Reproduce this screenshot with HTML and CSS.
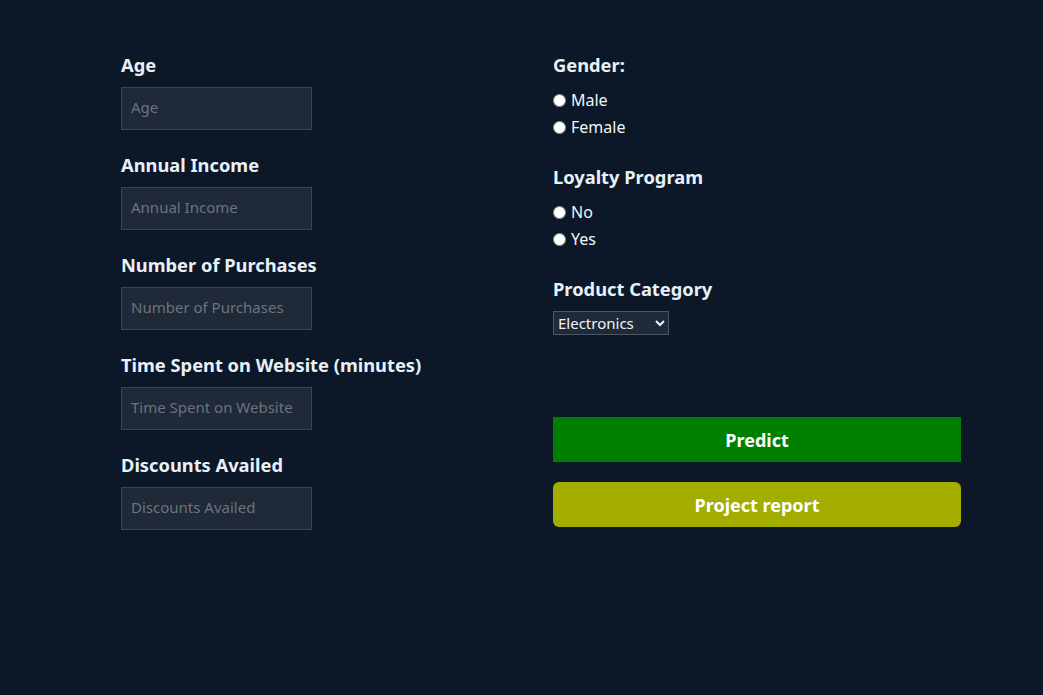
FILE: index.html
```html
<!DOCTYPE html>
<html>
<head>
<meta charset="utf-8">
<link rel="stylesheet" href="styles.css">
</head>
<body>
<form class="form">
  <div class="col col-left">
    <div class="field">
      <label class="label">Age</label>
      <input class="input" type="text" placeholder="Age">
    </div>
    <div class="field">
      <label class="label">Annual Income</label>
      <input class="input" type="text" placeholder="Annual Income">
    </div>
    <div class="field">
      <label class="label">Number of Purchases</label>
      <input class="input" type="text" placeholder="Number of Purchases">
    </div>
    <div class="field">
      <label class="label">Time Spent on Website (minutes)</label>
      <input class="input" type="text" placeholder="Time Spent on Website">
    </div>
    <div class="field">
      <label class="label">Discounts Availed</label>
      <input class="input" type="text" placeholder="Discounts Availed">
    </div>
  </div>
  <div class="col col-right">
    <div class="group">
      <div class="label">Gender:</div>
      <label class="radio"><input type="radio" name="g"> Male</label>
      <label class="radio"><input type="radio" name="g"> Female</label>
    </div>
    <div class="group">
      <div class="label">Loyalty Program</div>
      <label class="radio"><input type="radio" name="l"> No</label>
      <label class="radio"><input type="radio" name="l"> Yes</label>
    </div>
    <div class="group">
      <div class="label label-select">Product Category</div>
      <select class="select">
        <option>Electronics</option>
        <option>Clothing</option>
        <option>Home Goods</option>
      </select>
    </div>
    <div class="buttons">
      <button type="button" class="btn btn-predict">Predict</button>
      <button type="button" class="btn btn-report">Project report</button>
    </div>
  </div>
</form>
</body>
</html>
```
FILE: styles.css
```css
html, body {
  margin: 0;
  padding: 0;
  background: #0c1827;
  height: 100%;
}
body {
  font-family: "Noto Sans", "Open Sans", sans-serif;
  color: #e8f0f8;
}
.form {
  display: grid;
  grid-template-columns: 432px 408px;
  padding: 51px 0 0 121px;
}
.col {
  display: flex;
  flex-direction: column;
}
.field {
  display: flex;
  flex-direction: column;
  margin-bottom: 21px;
}
.label {
  font-weight: 700;
  font-size: 18.3px;
  line-height: 28px;
  color: #e8f0f8;
  margin-bottom: 8px;
}
.input {
  box-sizing: border-box;
  width: 191px;
  height: 43px;
  background: #1f2937;
  border: 1px solid #3a4656;
  color: #e8f0f8;
  font-family: inherit;
  font-size: 15px;
  padding: 0 9px 3px;
  outline: none;
}
.input::placeholder {
  color: #6b7480;
}
.group {
  display: flex;
  flex-direction: column;
  margin-bottom: 22px;
}
.group .label {
  margin-bottom: 8px;
}
.group .label-select {
  margin-bottom: 8px;
}
.radio {
  display: flex;
  align-items: center;
  font-size: 16px;
  line-height: 27px;
  color: #f0f4f8;
}
.radio input {
  margin: 0 5px 0 0;
  width: 13px;
  height: 13px;
}
.select {
  width: 116px;
  height: 24px;
  background: #1f2937;
  color: #f0f4f8;
  border: 1px solid #4a5565;
  font-family: inherit;
  font-size: 15px;
}
.buttons {
  display: flex;
  flex-direction: column;
  gap: 20px;
  margin-top: 60px;
}
.btn {
  height: 45px;
  border: none;
  color: #ffffff;
  font-family: inherit;
  font-weight: 700;
  font-size: 18px;
  cursor: pointer;
}
.btn-predict {
  background: #008000;
}
.btn-report {
  background: #a3ad00;
  border-radius: 6px;
}
```
